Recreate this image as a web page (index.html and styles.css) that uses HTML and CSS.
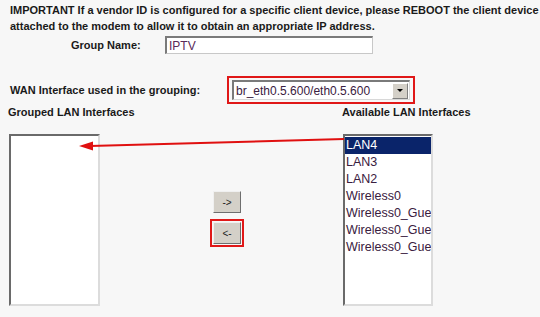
FILE: index.html
```html
<!DOCTYPE html>
<html lang="en">
  <head>
    <meta charset="UTF-8" />
    <title>Interface Grouping</title>
    <link rel="stylesheet" href="styles.css">
  </head>
  <body>
    <p class="notice">
      IMPORTANT If a vendor ID is configured for a specific client device, please REBOOT the client device<br />
      attached to the modem to allow it to obtain an appropriate IP address.
    </p>

    <div class="field group">
      <label for="groupName" class="name">Group Name:</label>
      <input type="text" id="groupName" class="text" value="IPTV" />
    </div>

    <div class="field wan">
      <label class="wanlabel">WAN Interface used in the grouping:</label>
      <div class="mark">
        <div class="select">
          <span class="value">br_eth0.5.600/eth0.5.600</span>
          <span class="drop"><i class="tri"></i></span>
        </div>
      </div>
    </div>

    <div class="heads">
      <span class="head left">Grouped LAN Interfaces</span>
      <span class="head right">Available LAN Interfaces</span>
    </div>

    <div class="lists">
      <div class="listbox grouped"></div>

      <div class="moves">
        <button class="btn">-&gt;</button>
        <div class="mark small">
          <button class="btn">&lt;-</button>
        </div>
      </div>

      <div class="listbox available">
        <div class="opt selected">LAN4</div>
        <div class="opt">LAN3</div>
        <div class="opt">LAN2</div>
        <div class="opt">Wireless0</div>
        <div class="opt">Wireless0_Gue</div>
        <div class="opt">Wireless0_Gue</div>
        <div class="opt">Wireless0_Gue</div>
      </div>
    </div>

    <!-- red annotation arrow -->
    <svg class="arrow" width="540" height="317" viewBox="0 0 540 317">
      <line x1="344" y1="139" x2="90" y2="146" stroke="#e01010" stroke-width="2" />
      <polygon points="79,146 93,141.5 93,150.5" fill="#e01010" />
    </svg>
  </body>
</html>
```

FILE: styles.css
```css
* {
  box-sizing: border-box;
}

body {
  margin: 0;
  padding-top: 2px;
  width: 540px;
  height: 317px;
  overflow: hidden;
  position: relative;
  background: #f7f7f7;
  font-family: "Liberation Sans", Arial, sans-serif;
  font-size: 11px;
  color: #1a1a1a;
}

.notice {
  margin: 0 0 0 10px;
  font-weight: bold;
  line-height: 16px;
  white-space: nowrap;
}

.field {
  display: flex;
  align-items: center;
}

.group {
  margin-top: 2px;
  height: 18px;
}

.name {
  margin-left: 71px;
  width: 94px;
  font-weight: bold;
}

.text {
  width: 208px;
  height: 18px;
  margin: 0;
  padding: 0 2px;
  border: 1px solid #c8c8c8;
  border-top: 2px solid #7a7a7a;
  border-left: 2px solid #7a7a7a;
  background: #fff;
  font-family: "Liberation Sans", Arial, sans-serif;
  font-size: 12px;
  color: #5a2a5a;
}

.wan {
  margin-top: 22px;
}

.wanlabel {
  margin-left: 10px;
  width: 217px;
  font-weight: bold;
}

.mark {
  border: 2px solid #e01818;
  padding: 2px 3px;
}

.select {
  display: flex;
  align-items: center;
  width: 178px;
  height: 20px;
  background: #fff;
  border: 1px solid #d8d8d8;
  border-top: 2px solid #7a7a7a;
  border-left: 2px solid #7a7a7a;
}

.value {
  flex: 1;
  padding-left: 2px;
  font-size: 12px;
  color: #3a2040;
}

.drop {
  width: 16px;
  height: 16px;
  margin-right: 1px;
  display: flex;
  align-items: center;
  justify-content: center;
  background: #d4d0c8;
  border: 1px solid;
  border-color: #fff #808080 #808080 #fff;
}

.tri {
  width: 0;
  height: 0;
  border-left: 3px solid transparent;
  border-right: 3px solid transparent;
  border-top: 3px solid #000;
}

.heads {
  display: flex;
  height: 16px;
  line-height: 16px;
  font-weight: bold;
}

.head.left {
  margin-left: 8px;
  width: 334px;
}

.lists {
  display: flex;
  margin-top: 14px;
}

.listbox {
  height: 172px;
  background: #fff;
  border: 2px solid #dcdcdc;
  border-top-color: #6a6a6a;
  border-left-color: #6a6a6a;
  overflow: hidden;
}

.grouped {
  margin-left: 9px;
  width: 91px;
}

.available {
  width: 90px;
  padding-top: 1px;
}

.moves {
  width: 243px;
  padding: 57px 0 0 110px;
  display: flex;
  flex-direction: column;
  align-items: flex-start;
  gap: 6px;
}

.btn {
  width: 28px;
  height: 22px;
  margin: 0 0 0 3px;
  padding: 0;
  background: #d4d0c8;
  border: 1px solid;
  border-color: #f0f0f0 #6e6e6e #6e6e6e #f0f0f0;
  font-family: "Liberation Sans", Arial, sans-serif;
  font-size: 10px;
  color: #222;
}

.mark.small {
  padding: 1px;
}

.mark.small .btn {
  margin: 0;
}

.opt {
  height: 17px;
  line-height: 17px;
  padding-left: 1px;
  font-size: 12.5px;
  white-space: nowrap;
  color: #3a2040;
}

.opt.selected {
  background: #0a246a;
  color: #fff;
}

.arrow {
  position: absolute;
  left: 0;
  top: 0;
  pointer-events: none;
}
```
